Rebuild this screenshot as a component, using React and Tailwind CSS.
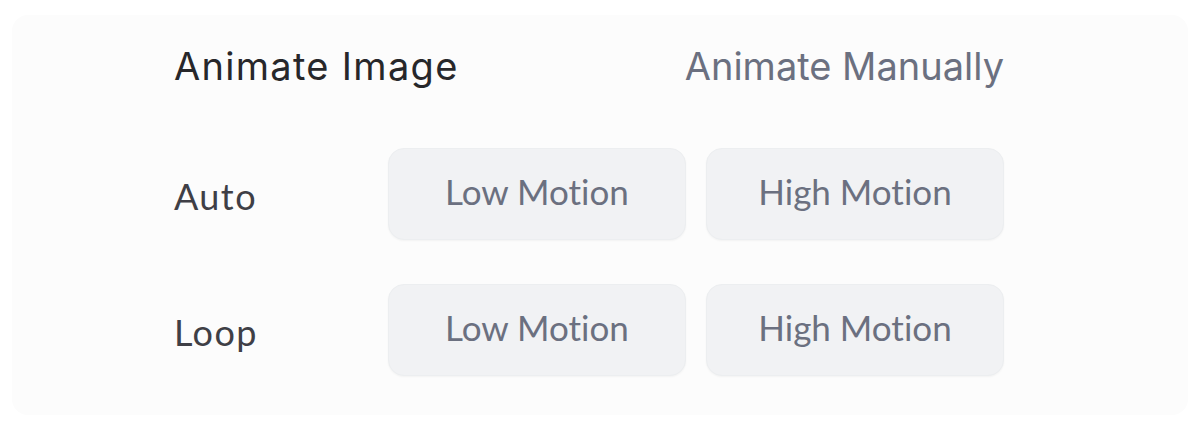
export default function App() {
  const rows = ['Auto', 'Loop'];

  return (
    <div className="h-[424px] w-[1200px] bg-white px-[12px] pt-[15px] pb-[9px]">
      <div className="h-full rounded-2xl bg-[#fcfcfc] pl-[162px] pr-[184px] pt-[20px]">
        {/* Header */}
        <div className="flex h-[62px] items-center justify-between font-['Inter',sans-serif]">
          <h1 className="text-[38px] font-normal tracking-[1.3px] text-[#27272a]">Animate Image</h1>
          <span className="text-[38px] font-normal text-[#6b7080]">Animate Manually</span>
        </div>

        {/* Options */}
        <div className="mt-[51px] flex flex-col gap-[44px]">
          {rows.map((row) => (
            <div key={row} className="flex items-center">
              <span className="w-[214px] pt-[4px] font-['Lato',sans-serif] text-[36px] tracking-[0.04em] text-[#3f3f46]">{row}</span>
              <div className="flex gap-[20px]">
                <button className="h-[92px] w-[298px] rounded-2xl border border-[#eceef0] bg-[#f1f2f4] pb-[5px] font-['Lato',sans-serif] text-[35px] text-[#6b7080] shadow-[0_1px_2px_rgba(0,0,0,0.04)] [font-variant-ligatures:none]">
                  Low Motion
                </button>
                <button className="h-[92px] w-[298px] rounded-2xl border border-[#eceef0] bg-[#f1f2f4] pb-[5px] font-['Lato',sans-serif] text-[35px] text-[#6b7080] shadow-[0_1px_2px_rgba(0,0,0,0.04)] [font-variant-ligatures:none]">
                  High Motion
                </button>
              </div>
            </div>
          ))}
        </div>
      </div>
    </div>
  );
}
